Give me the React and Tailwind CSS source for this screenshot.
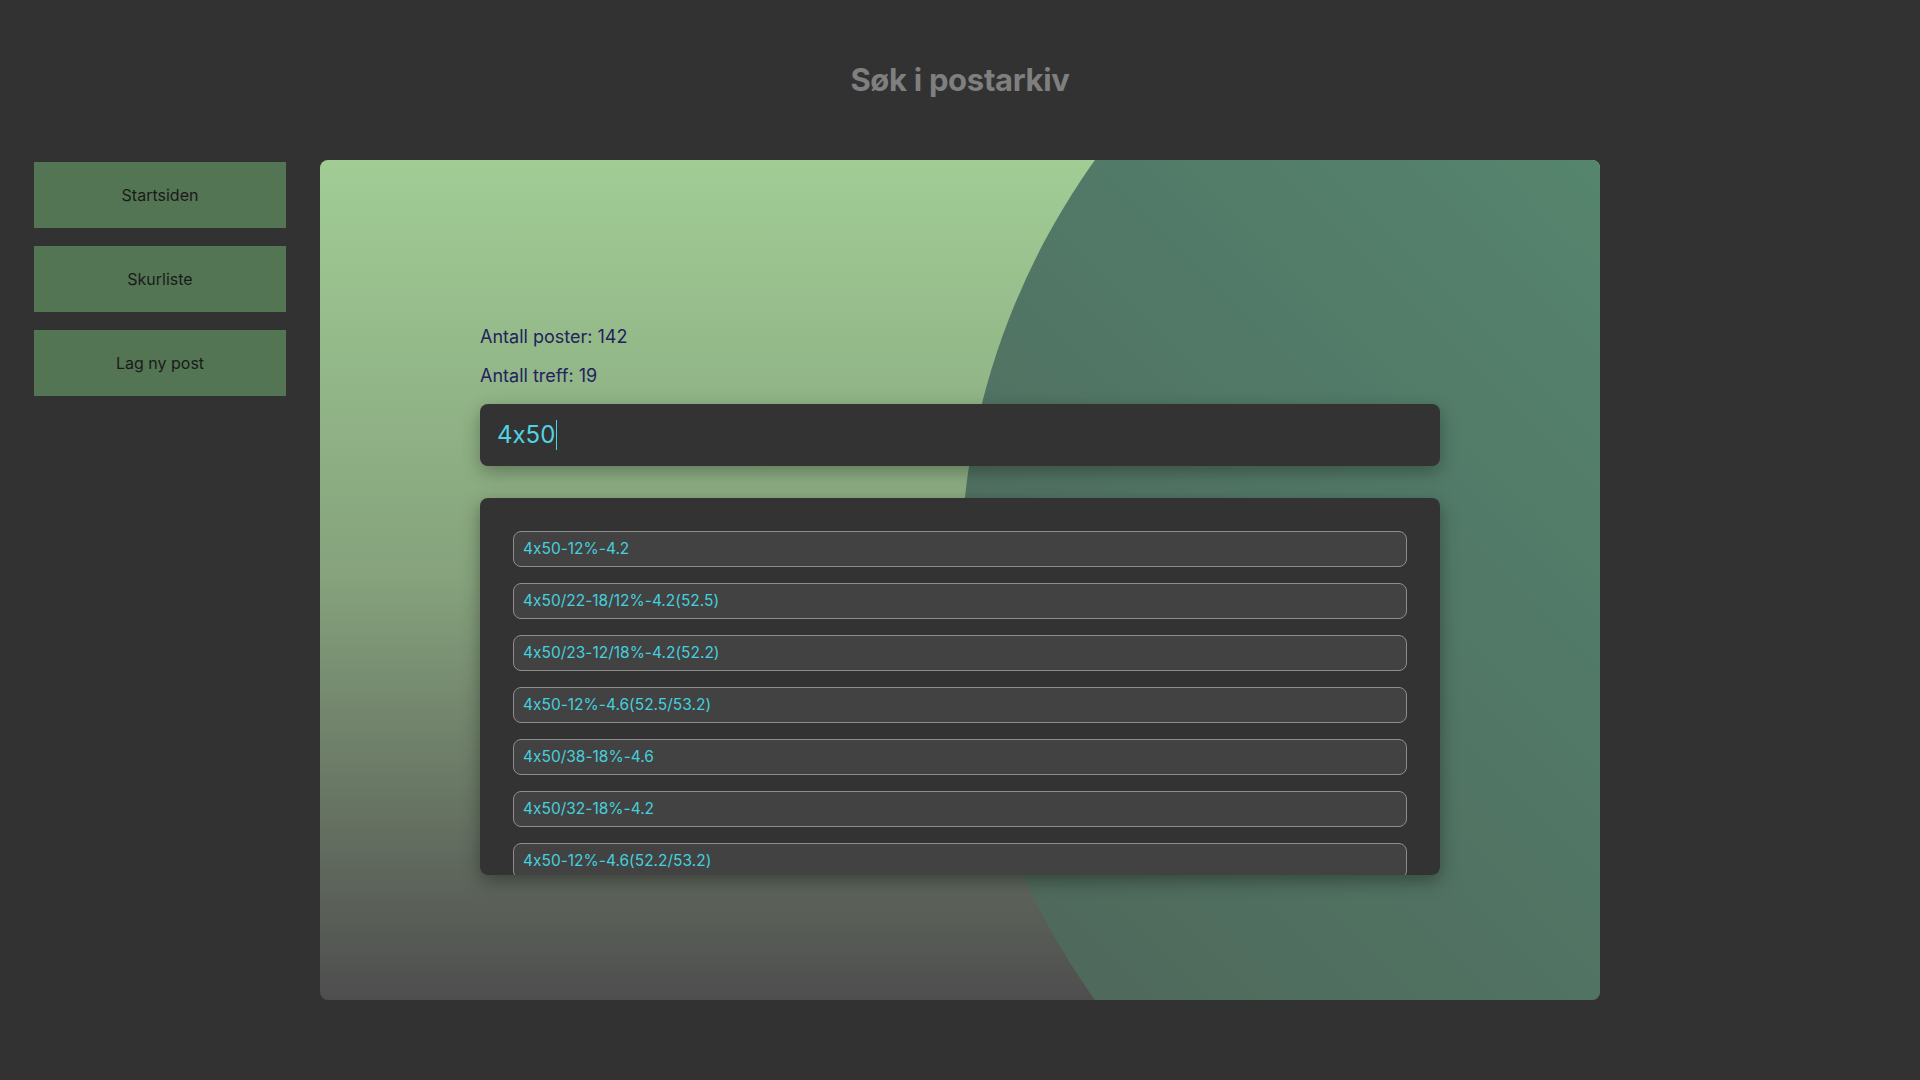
import React from 'react';

const navItems = ['Startsiden', 'Skurliste', 'Lag ny post'];

const hits = [
  '4x50-12%-4.2',
  '4x50/22-18/12%-4.2(52.5)',
  '4x50/23-12/18%-4.2(52.2)',
  '4x50-12%-4.6(52.5/53.2)',
  '4x50/38-18%-4.6',
  '4x50/32-18%-4.2',
  '4x50-12%-4.6(52.2/53.2)',
  '4x50/22-18%-4.2',
  '4x50-18%-4.2(52.5)',
  '4x50/25-12%-4.6',
  '4x50/38-12%-4.2(53.2)',
  '4x50-12%-5.0',
  '4x50/32-12/18%-4.6',
  '4x50-18%-4.6(52.2)',
  '4x50/22-12%-4.2(52.2/53.2)',
  '4x50/23-18%-4.6',
  '4x50-12%-4.2(53.2)',
  '4x50/38-12/18%-4.2',
  '4x50-18%-5.0',
];

// Sidebar med navigasjonsknapper
const Sidebar = () => (
  <nav className="w-[252px] pt-[2px] flex flex-col gap-[18px]">
    {navItems.map((label) => (
      <button
        key={label}
        className="h-[66px] w-full bg-[#537553] text-[16px] text-[#1a1a1a] flex items-center justify-center"
      >
        {label}
      </button>
    ))}
  </nav>
);

// Resultatliste
const HitList = ({ items }) => (
  <div className="mt-[32px] h-[377px] w-full rounded-lg bg-[#333333] shadow-[0_6px_18px_rgba(0,0,0,0.35)] overflow-y-auto [scrollbar-width:none]">
    <div className="p-[33px] flex flex-col gap-[16px]">
      {items.map((item, i) => (
        <div
          key={i}
          className="h-[36px] shrink-0 rounded-lg border border-[#8d8d8d] bg-[#424242] px-[9px] flex items-center text-[15.5px] text-[#45cfdf]"
        >
          {item}
        </div>
      ))}
    </div>
  </div>
);

export default function App() {
  return (
    <div className="min-h-screen bg-[#323232] font-['Inter','Liberation_Sans',sans-serif] [font-feature-settings:'calt'_0]">
      <header className="h-[160px] flex items-center justify-center">
        <h1 className="text-[31px] font-bold text-[#7f7f7f] tracking-[-0.01em]">Søk i postarkiv</h1>
      </header>

      <div className="flex gap-[34px] pl-[34px]">
        <Sidebar />

        <main className="relative w-[1280px] h-[840px] rounded-lg overflow-hidden bg-gradient-to-b from-[#a1cd95] via-[#85a27c] via-50% to-[#4e4e4e]">
          {/* bakgrunnssirkel */}
          <div className="absolute left-[640px] top-[-301px] w-[1442px] h-[1442px] rounded-full bg-gradient-to-tr from-[#4d6155] via-[#527a68] via-45% to-[#5e9f7a]" />

          <div className="relative flex flex-col items-center pt-[163px]">
            <div className="w-[960px] flex flex-col">
              <p className="text-[18px] leading-7 text-[#22235c]">Antall poster: 142</p>
              <p className="mt-[11px] text-[18px] leading-7 text-[#22235c]">Antall treff: 19</p>

              <div className="mt-[14px] h-[62px] w-full rounded-lg bg-[#333333] shadow-[0_6px_18px_rgba(0,0,0,0.3)] px-[17px] flex items-center">
                <span className="text-[24px] text-[#4fd3e4]">4x50</span>
                <span className="ml-[1px] h-[30px] w-[1px] bg-[#4fd3e4]" />
              </div>

              <HitList items={hits} />
            </div>
          </div>
        </main>
      </div>
    </div>
  );
}
